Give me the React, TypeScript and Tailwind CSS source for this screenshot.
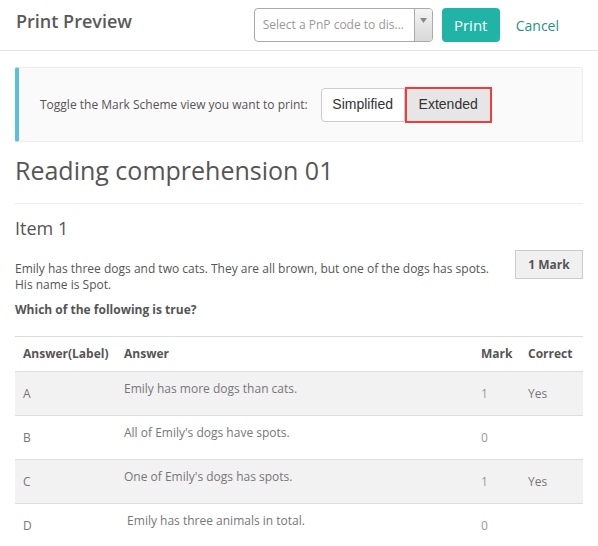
import React from "react";

const rows = [
  { label: "A", answer: "Emily has more dogs than cats.", mark: "1", correct: "Yes", grey: true },
  { label: "B", answer: "All of Emily's dogs have spots.", mark: "0", correct: "", grey: false },
  { label: "C", answer: "One of Emily's dogs has spots.", mark: "1", correct: "Yes", grey: true },
  { label: "D", answer: " Emily has three animals in total.", mark: "0", correct: "", grey: false },
];

export default function App() {
  return (
    <div className="w-[598px] h-[546px] overflow-hidden bg-white text-[#555]" style={{ fontFamily: '"Open Sans", sans-serif' }}>
      <div className="flex items-center h-[51px] border-b border-[#e5e5e5] pl-[16px] pr-[39px]">
        <div className="text-[18px] font-semibold text-[#595959] flex-1 -mt-[8px]">Print Preview</div>
        <div className="flex items-center gap-[9px]">
          <div className="flex w-[179px] h-[34px] border border-[#aaa] rounded-[4px] overflow-hidden">
            <div className="flex-1 flex items-center pl-[8px] text-[12px] text-[#999] whitespace-nowrap overflow-hidden">Select a PnP code to dis...</div>
            <div className="w-[18px] border-l border-[#aaa] bg-gradient-to-b from-[#f4f4f4] to-[#d8d8d8] flex items-start justify-center pt-[9px]">
              <svg width="7" height="5" viewBox="0 0 7 5"><path d="M0 0h7L3.5 5z" fill="#888" /></svg>
            </div>
          </div>
          <div className="w-[58px] h-[34px] rounded-[4px] bg-[#21b3a6] text-white text-[15px] flex items-center justify-center">Print</div>
          <div className="text-[#1c9589] text-[14px] ml-[7px]">Cancel</div>
        </div>
      </div>

      <div className="px-[15px]">
        <div className="mt-[16px] h-[75px] flex items-center bg-[#fafafa] border border-[#eee] border-l-[4px] border-l-[#5bc0de] rounded-[2px] pl-[21px]">
          <div className="text-[12px] text-[#555]">Toggle the Mark Scheme view you want to print:</div>
          <div className="flex ml-[13px] items-center" style={{ fontFamily: '"Liberation Sans", Arial, sans-serif' }}>
            <div className="w-[84px] h-[34px] bg-white border border-[#ccc] rounded-l-[4px] flex items-center justify-center text-[14px] text-[#333]">Simplified</div>
            <div className="w-[87px] h-[36px] bg-[#e6e6e6] border-2 border-[#f03c3c] flex items-center justify-center text-[14px] text-[#333]">Extended</div>
          </div>
        </div>

        <h1 className="text-[25px] text-[#555] mt-[10px] leading-[36px]">Reading comprehension 01</h1>
        <div className="border-t border-[#eee] mt-[15px]"></div>

        <h2 className="text-[18px] text-[#555] mt-[11px] leading-[26px]">Item 1</h2>

        <div className="flex items-start mt-[9px]">
          <p className="flex-1 text-[12px] leading-[16px] text-[#555] mt-[11px] pr-[20px]">
            Emily has three dogs and two cats. They are all brown, but one of the dogs has spots. His name is Spot.
          </p>
          <div className="w-[68px] h-[29px] bg-[#f0f0f0] border border-[#ccc] flex items-center justify-center text-[12px] font-bold text-[#555]">1 Mark</div>
        </div>
        <p className="text-[12px] font-bold text-[#555] mt-[9px] leading-[16px]">Which of the following is true?</p>

        <table className="w-full mt-[18px] border-t border-[#ddd] text-[12px]">
          <thead>
            <tr className="h-[35px] border-b border-[#ddd]">
              <th className="text-left font-bold pl-[8px] w-[109px]">Answer(Label)</th>
              <th className="text-left font-bold">Answer</th>
              <th className="text-left font-bold w-[47px]">Mark</th>
              <th className="text-left font-bold w-[55px]">Correct</th>
            </tr>
          </thead>
          <tbody>
            {rows.map((r) => (
              <tr key={r.label} className={`h-[44px] border-b border-[#ddd] text-[#777] ${r.grey ? "bg-[#f2f2f2]" : "bg-white"}`}>
                <td className="pl-[8px]">{r.label}</td>
                <td className="align-top pt-[8px] whitespace-pre">{r.answer}</td>
                <td className="text-[#999]">{r.mark}</td>
                <td>{r.correct}</td>
              </tr>
            ))}
          </tbody>
        </table>
      </div>
    </div>
  );
}
